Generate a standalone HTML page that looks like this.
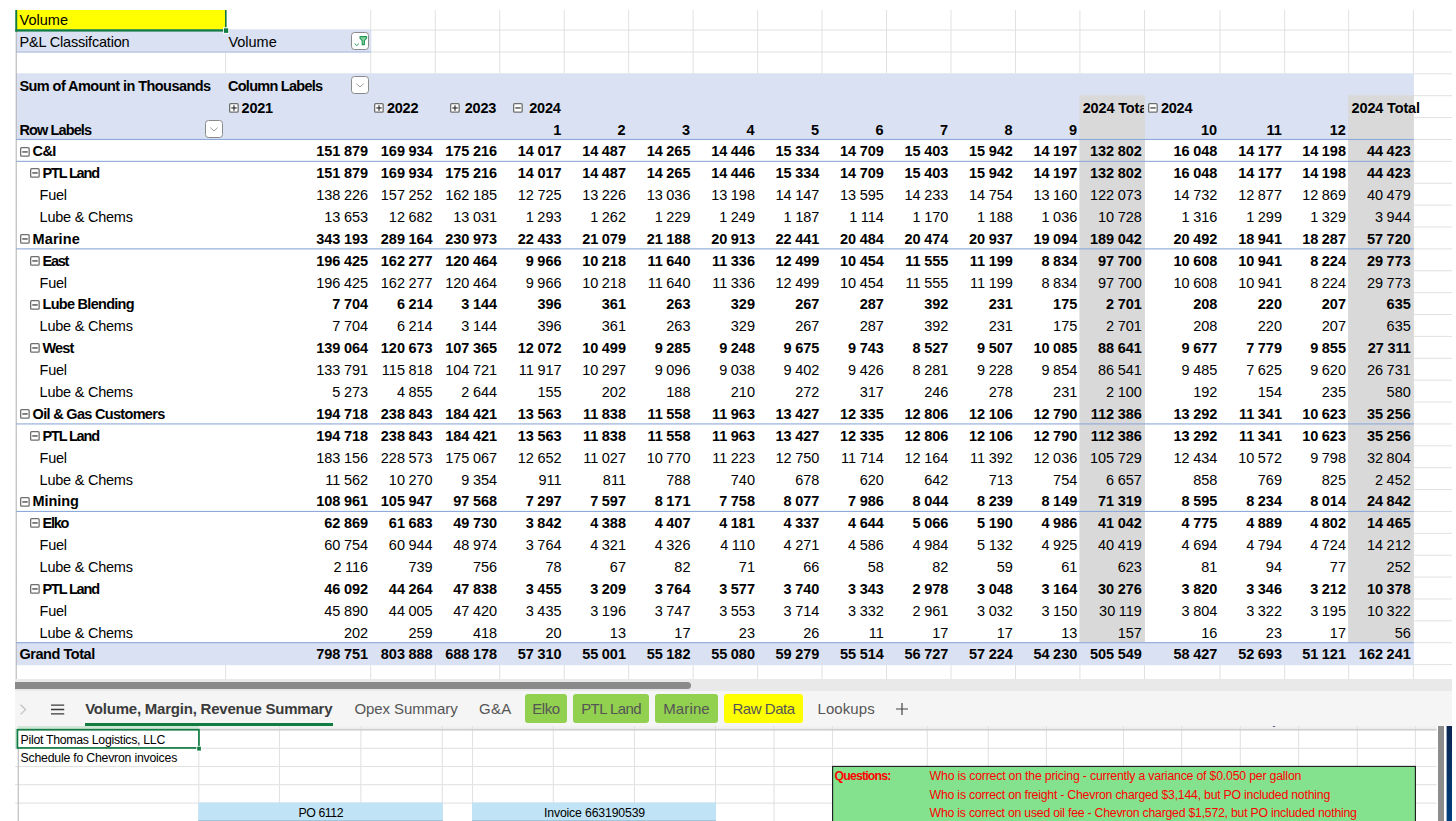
<!DOCTYPE html>
<html lang="en">
<head>
<meta charset="utf-8">
<title>Volume, Margin, Revenue Summary</title>
<style>
html,body{margin:0;padding:0;background:#fff;}
body{width:1456px;height:821px;position:relative;overflow:hidden;font-family:"Liberation Sans",sans-serif;}
.abs,.r,.c,.l,.hl,.vl,.box,.t{position:absolute;}
#top{position:absolute;left:0;top:10px;width:1456px;height:669px;overflow:hidden;font-size:14.5px;color:#000;}
#top .in{position:absolute;left:0;top:-10px;width:1456px;height:700px;}
.hl{height:1px;background:#e1e1e1;}
.vl{width:1px;background:#e1e1e1;}
.r{left:0;width:1456px;height:21.875px;line-height:21.875px;white-space:nowrap;}
.r.b{font-weight:bold;}
.r.b .c,.r.b .l{top:1.9px;}
.r.h5 .c,.r.h5 .l{top:2.5px;}
.r.h6 .c,.r.h6 .l{top:2.3px;}
.c{top:2.1px;text-align:right;word-spacing:-0.5px;height:21.875px;}
.l{top:2.1px;height:21.875px;}
.bx{position:absolute;top:6.25px;}
.dd{position:absolute;width:16px;height:16px;border:1px solid #8a8a8a;border-radius:3.5px;background:#fff;}
.dd svg{position:absolute;left:0;top:0;}
</style>
</head>
<body>
<div id="top"><div class="in">
<svg class="abs" style="left:0;top:0" width="1456" height="700" viewBox="0 0 1456 700"><rect x="16" y="29.58" width="1436" height="1.0" fill="#e1e1e1"/><rect x="16" y="51.46" width="1436" height="1.0" fill="#e1e1e1"/><rect x="16" y="73.34" width="1436" height="1.0" fill="#e1e1e1"/><rect x="16" y="95.22" width="1436" height="1.0" fill="#e1e1e1"/><rect x="16" y="117.1" width="1436" height="1.0" fill="#e1e1e1"/><rect x="16" y="138.98" width="1436" height="1.0" fill="#e1e1e1"/><rect x="16" y="160.86" width="1436" height="1.0" fill="#e1e1e1"/><rect x="16" y="182.74" width="1436" height="1.0" fill="#e1e1e1"/><rect x="16" y="204.62" width="1436" height="1.0" fill="#e1e1e1"/><rect x="16" y="226.5" width="1436" height="1.0" fill="#e1e1e1"/><rect x="16" y="248.38" width="1436" height="1.0" fill="#e1e1e1"/><rect x="16" y="270.26" width="1436" height="1.0" fill="#e1e1e1"/><rect x="16" y="292.14" width="1436" height="1.0" fill="#e1e1e1"/><rect x="16" y="314.02" width="1436" height="1.0" fill="#e1e1e1"/><rect x="16" y="335.9" width="1436" height="1.0" fill="#e1e1e1"/><rect x="16" y="357.78" width="1436" height="1.0" fill="#e1e1e1"/><rect x="16" y="379.66" width="1436" height="1.0" fill="#e1e1e1"/><rect x="16" y="401.54" width="1436" height="1.0" fill="#e1e1e1"/><rect x="16" y="423.42" width="1436" height="1.0" fill="#e1e1e1"/><rect x="16" y="445.3" width="1436" height="1.0" fill="#e1e1e1"/><rect x="16" y="467.18" width="1436" height="1.0" fill="#e1e1e1"/><rect x="16" y="489.06" width="1436" height="1.0" fill="#e1e1e1"/><rect x="16" y="510.94" width="1436" height="1.0" fill="#e1e1e1"/><rect x="16" y="532.82" width="1436" height="1.0" fill="#e1e1e1"/><rect x="16" y="554.7" width="1436" height="1.0" fill="#e1e1e1"/><rect x="16" y="576.58" width="1436" height="1.0" fill="#e1e1e1"/><rect x="16" y="598.46" width="1436" height="1.0" fill="#e1e1e1"/><rect x="16" y="620.34" width="1436" height="1.0" fill="#e1e1e1"/><rect x="16" y="642.22" width="1436" height="1.0" fill="#e1e1e1"/><rect x="16" y="664.1" width="1436" height="1.0" fill="#e1e1e1"/><rect x="16" y="685.98" width="1436" height="1.0" fill="#e1e1e1"/><rect x="225.1" y="0" width="1.0" height="679" fill="#e1e1e1"/><rect x="370.2" y="0" width="1.0" height="679" fill="#e1e1e1"/><rect x="434.8" y="0" width="1.0" height="679" fill="#e1e1e1"/><rect x="499.2" y="0" width="1.0" height="679" fill="#e1e1e1"/><rect x="563.7" y="0" width="1.0" height="679" fill="#e1e1e1"/><rect x="628.1" y="0" width="1.0" height="679" fill="#e1e1e1"/><rect x="692.6" y="0" width="1.0" height="679" fill="#e1e1e1"/><rect x="757.1" y="0" width="1.0" height="679" fill="#e1e1e1"/><rect x="821.5" y="0" width="1.0" height="679" fill="#e1e1e1"/><rect x="886.0" y="0" width="1.0" height="679" fill="#e1e1e1"/><rect x="950.5" y="0" width="1.0" height="679" fill="#e1e1e1"/><rect x="1015.0" y="0" width="1.0" height="679" fill="#e1e1e1"/><rect x="1079.4" y="0" width="1.0" height="679" fill="#e1e1e1"/><rect x="1144.0" y="0" width="1.0" height="679" fill="#e1e1e1"/><rect x="1219.5" y="0" width="1.0" height="679" fill="#e1e1e1"/><rect x="1284.1" y="0" width="1.0" height="679" fill="#e1e1e1"/><rect x="1348.1" y="0" width="1.0" height="679" fill="#e1e1e1"/><rect x="1412.9" y="0" width="1.0" height="679" fill="#e1e1e1"/><rect x="16.5" y="73.34" width="1397.4" height="591.76" fill="#fff"/><rect x="16" y="0" width="210.1" height="30.58" fill="#ffff00"/><rect x="16" y="29.58" width="355.2" height="22.88" fill="#d9e1f2"/><rect x="16" y="51.36" width="355.2" height="1.2" fill="#b4c6e7"/><rect x="16" y="73.34" width="1397.9" height="66.64" fill="#d9e1f2"/><rect x="1079.4" y="95.22" width="65.6" height="547.5" fill="#d9d9d9"/><rect x="1348.1" y="95.22" width="65.8" height="547.5" fill="#d9d9d9"/><rect x="16" y="642.22" width="1397.9" height="22.88" fill="#d9e1f2"/><rect x="16" y="138.93" width="1397.9" height="1.1" fill="#8ea9db"/><rect x="16" y="160.81" width="1397.9" height="1.1" fill="#8ea9db"/><rect x="16" y="248.33" width="1397.9" height="1.1" fill="#8ea9db"/><rect x="16" y="423.37" width="1397.9" height="1.1" fill="#8ea9db"/><rect x="16" y="510.89" width="1397.9" height="1.1" fill="#8ea9db"/><rect x="16" y="642.17" width="1397.9" height="1.1" fill="#8ea9db"/><rect x="15.7" y="0" width="1.0" height="679" fill="#b0b0b0"/><rect x="15.3" y="0" width="1.9" height="31.58" fill="#107c41"/><rect x="15.3" y="29.28" width="211.1" height="2.3" fill="#107c41"/><rect x="225.0" y="0" width="1.6" height="27.88" fill="#107c41"/><rect x="223.0" y="27.28" width="6.0" height="6.6" fill="#fff"/><rect x="223.9" y="28.28" width="4.3" height="4.6" fill="#107c41"/></svg>
<div class="r " style="top:8.1px"><span class="l" style="left:19.6px;">Volume</span></div>
<div class="r " style="top:29.98px"><span class="l" style="left:19.6px;letter-spacing:-0.188px;">P&amp;L Classifcation</span><span class="l" style="left:228.4px;">Volume</span></div>
<div class="r b" style="top:73.72px"><span class="l" style="left:19.4px;letter-spacing:-0.56px;">Sum of Amount in Thousands</span><span class="l" style="left:228px;letter-spacing:-0.734px;">Column Labels</span></div>
<div class="r b h5" style="top:95.6px"><svg class="bx" style="left:228.0px" width="12" height="12" viewBox="0 0 12 12"><rect x="1.65" y="1.65" width="8.5" height="8.5" rx="1" fill="#fff" stroke="#6e6e6e" stroke-width="1.3"/><g stroke="#303030" stroke-width="1.2" fill="none"><path d="M3.3 5.95H8.7"/><path d="M6 3.3V8.7"/></g></svg><span class="l" style="left:241.6px;letter-spacing:-0.267px;">2021</span><svg class="bx" style="left:373.4px" width="12" height="12" viewBox="0 0 12 12"><rect x="1.65" y="1.65" width="8.5" height="8.5" rx="1" fill="#fff" stroke="#6e6e6e" stroke-width="1.3"/><g stroke="#303030" stroke-width="1.2" fill="none"><path d="M3.3 5.95H8.7"/><path d="M6 3.3V8.7"/></g></svg><span class="l" style="left:387px;letter-spacing:-0.267px;">2022</span><svg class="bx" style="left:449.2px" width="12" height="12" viewBox="0 0 12 12"><rect x="1.65" y="1.65" width="8.5" height="8.5" rx="1" fill="#fff" stroke="#6e6e6e" stroke-width="1.3"/><g stroke="#303030" stroke-width="1.2" fill="none"><path d="M3.3 5.95H8.7"/><path d="M6 3.3V8.7"/></g></svg><span class="l" style="left:464.8px;letter-spacing:-0.267px;">2023</span><svg class="bx" style="left:512.3px" width="12" height="12" viewBox="0 0 12 12"><rect x="1.65" y="1.65" width="8.5" height="8.5" rx="1" fill="#fff" stroke="#6e6e6e" stroke-width="1.3"/><g stroke="#303030" stroke-width="1.2" fill="none"><path d="M3.3 5.95H8.7"/></g></svg><span class="l" style="left:529.3px;letter-spacing:-0.267px;">2024</span><span class="l" style="left:1082.7px;width:61.8px;overflow:hidden;letter-spacing:-0.156px;">2024 Total</span><svg class="bx" style="left:1147.4px" width="12" height="12" viewBox="0 0 12 12"><rect x="1.65" y="1.65" width="8.5" height="8.5" rx="1" fill="#fff" stroke="#6e6e6e" stroke-width="1.3"/><g stroke="#303030" stroke-width="1.2" fill="none"><path d="M3.3 5.95H8.7"/></g></svg><span class="l" style="left:1161px;letter-spacing:-0.267px;">2024</span><span class="l" style="left:1351.6px;letter-spacing:-0.156px;">2024 Total</span></div>
<div class="r b h6" style="top:117.47px"><span class="l" style="left:19.5px;letter-spacing:-0.889px;">Row Labels</span><span class="c" style="left:499.7px;width:61.6px">1</span><span class="c" style="left:564.2px;width:61.5px">2</span><span class="c" style="left:628.6px;width:61.6px">3</span><span class="c" style="left:693.1px;width:61.6px">4</span><span class="c" style="left:757.6px;width:61.5px">5</span><span class="c" style="left:822.0px;width:61.6px">6</span><span class="c" style="left:886.5px;width:61.6px">7</span><span class="c" style="left:951.0px;width:61.6px">8</span><span class="c" style="left:1015.5px;width:61.5px">9</span><span class="c" style="left:1144.5px;width:72.7px">10</span><span class="c" style="left:1220.0px;width:61.8px">11</span><span class="c" style="left:1284.6px;width:61.2px">12</span></div>
<div class="r b" style="top:139.35px"><svg class="bx" style="left:19.3px" width="12" height="12" viewBox="0 0 12 12"><rect x="1.65" y="1.65" width="8.5" height="8.5" rx="1" fill="#fff" stroke="#6e6e6e" stroke-width="1.3"/><g stroke="#303030" stroke-width="1.2" fill="none"><path d="M3.3 5.95H8.7"/></g></svg><span class="l" style="left:32.6px;letter-spacing:-0.65px;">C&amp;I</span><span class="c" style="left:225.6px;width:142.5px">151 879</span><span class="c" style="left:370.7px;width:62.0px">169 934</span><span class="c" style="left:435.3px;width:61.8px">175 216</span><span class="c" style="left:499.7px;width:61.9px">14 017</span><span class="c" style="left:564.2px;width:61.8px">14 487</span><span class="c" style="left:628.6px;width:61.9px">14 265</span><span class="c" style="left:693.1px;width:61.9px">14 446</span><span class="c" style="left:757.6px;width:61.8px">15 334</span><span class="c" style="left:822.0px;width:61.9px">14 709</span><span class="c" style="left:886.5px;width:61.9px">15 403</span><span class="c" style="left:951.0px;width:61.9px">15 942</span><span class="c" style="left:1015.5px;width:61.8px">14 197</span><span class="c" style="left:1079.9px;width:62.0px">132 802</span><span class="c" style="left:1144.5px;width:72.9px">16 048</span><span class="c" style="left:1220.0px;width:62.0px">14 177</span><span class="c" style="left:1284.6px;width:61.4px">14 198</span><span class="c" style="left:1348.6px;width:62.2px">44 423</span></div>
<div class="r b" style="top:161.22px"><svg class="bx" style="left:29.2px" width="12" height="12" viewBox="0 0 12 12"><rect x="1.65" y="1.65" width="8.5" height="8.5" rx="1" fill="#fff" stroke="#6e6e6e" stroke-width="1.3"/><g stroke="#303030" stroke-width="1.2" fill="none"><path d="M3.3 5.95H8.7"/></g></svg><span class="l" style="left:42.5px;letter-spacing:-1.185px;">PTL Land</span><span class="c" style="left:225.6px;width:142.5px">151 879</span><span class="c" style="left:370.7px;width:62.0px">169 934</span><span class="c" style="left:435.3px;width:61.8px">175 216</span><span class="c" style="left:499.7px;width:61.9px">14 017</span><span class="c" style="left:564.2px;width:61.8px">14 487</span><span class="c" style="left:628.6px;width:61.9px">14 265</span><span class="c" style="left:693.1px;width:61.9px">14 446</span><span class="c" style="left:757.6px;width:61.8px">15 334</span><span class="c" style="left:822.0px;width:61.9px">14 709</span><span class="c" style="left:886.5px;width:61.9px">15 403</span><span class="c" style="left:951.0px;width:61.9px">15 942</span><span class="c" style="left:1015.5px;width:61.8px">14 197</span><span class="c" style="left:1079.9px;width:62.0px">132 802</span><span class="c" style="left:1144.5px;width:72.9px">16 048</span><span class="c" style="left:1220.0px;width:62.0px">14 177</span><span class="c" style="left:1284.6px;width:61.4px">14 198</span><span class="c" style="left:1348.6px;width:62.2px">44 423</span></div>
<div class="r " style="top:183.1px"><span class="l" style="left:39.6px;letter-spacing:-0.267px;">Fuel</span><span class="c" style="left:225.6px;width:142.5px">138 226</span><span class="c" style="left:370.7px;width:62.0px">157 252</span><span class="c" style="left:435.3px;width:61.8px">162 185</span><span class="c" style="left:499.7px;width:61.9px">12 725</span><span class="c" style="left:564.2px;width:61.8px">13 226</span><span class="c" style="left:628.6px;width:61.9px">13 036</span><span class="c" style="left:693.1px;width:61.9px">13 198</span><span class="c" style="left:757.6px;width:61.8px">14 147</span><span class="c" style="left:822.0px;width:61.9px">13 595</span><span class="c" style="left:886.5px;width:61.9px">14 233</span><span class="c" style="left:951.0px;width:61.9px">14 754</span><span class="c" style="left:1015.5px;width:61.8px">13 160</span><span class="c" style="left:1079.9px;width:62.0px">122 073</span><span class="c" style="left:1144.5px;width:72.9px">14 732</span><span class="c" style="left:1220.0px;width:62.0px">12 877</span><span class="c" style="left:1284.6px;width:61.4px">12 869</span><span class="c" style="left:1348.6px;width:62.2px">40 479</span></div>
<div class="r " style="top:204.97px"><span class="l" style="left:39.6px;letter-spacing:-0.236px;">Lube &amp; Chems</span><span class="c" style="left:225.6px;width:142.5px">13 653</span><span class="c" style="left:370.7px;width:62.0px">12 682</span><span class="c" style="left:435.3px;width:61.8px">13 031</span><span class="c" style="left:499.7px;width:61.9px">1 293</span><span class="c" style="left:564.2px;width:61.8px">1 262</span><span class="c" style="left:628.6px;width:61.9px">1 229</span><span class="c" style="left:693.1px;width:61.9px">1 249</span><span class="c" style="left:757.6px;width:61.8px">1 187</span><span class="c" style="left:822.0px;width:61.9px">1 114</span><span class="c" style="left:886.5px;width:61.9px">1 170</span><span class="c" style="left:951.0px;width:61.9px">1 188</span><span class="c" style="left:1015.5px;width:61.8px">1 036</span><span class="c" style="left:1079.9px;width:62.0px">10 728</span><span class="c" style="left:1144.5px;width:72.9px">1 316</span><span class="c" style="left:1220.0px;width:62.0px">1 299</span><span class="c" style="left:1284.6px;width:61.4px">1 329</span><span class="c" style="left:1348.6px;width:62.2px">3 944</span></div>
<div class="r b" style="top:226.85px"><svg class="bx" style="left:19.3px" width="12" height="12" viewBox="0 0 12 12"><rect x="1.65" y="1.65" width="8.5" height="8.5" rx="1" fill="#fff" stroke="#6e6e6e" stroke-width="1.3"/><g stroke="#303030" stroke-width="1.2" fill="none"><path d="M3.3 5.95H8.7"/></g></svg><span class="l" style="left:32.6px;letter-spacing:0.08px;">Marine</span><span class="c" style="left:225.6px;width:142.5px">343 193</span><span class="c" style="left:370.7px;width:62.0px">289 164</span><span class="c" style="left:435.3px;width:61.8px">230 973</span><span class="c" style="left:499.7px;width:61.9px">22 433</span><span class="c" style="left:564.2px;width:61.8px">21 079</span><span class="c" style="left:628.6px;width:61.9px">21 188</span><span class="c" style="left:693.1px;width:61.9px">20 913</span><span class="c" style="left:757.6px;width:61.8px">22 441</span><span class="c" style="left:822.0px;width:61.9px">20 484</span><span class="c" style="left:886.5px;width:61.9px">20 474</span><span class="c" style="left:951.0px;width:61.9px">20 937</span><span class="c" style="left:1015.5px;width:61.8px">19 094</span><span class="c" style="left:1079.9px;width:62.0px">189 042</span><span class="c" style="left:1144.5px;width:72.9px">20 492</span><span class="c" style="left:1220.0px;width:62.0px">18 941</span><span class="c" style="left:1284.6px;width:61.4px">18 287</span><span class="c" style="left:1348.6px;width:62.2px">57 720</span></div>
<div class="r b" style="top:248.72px"><svg class="bx" style="left:29.2px" width="12" height="12" viewBox="0 0 12 12"><rect x="1.65" y="1.65" width="8.5" height="8.5" rx="1" fill="#fff" stroke="#6e6e6e" stroke-width="1.3"/><g stroke="#303030" stroke-width="1.2" fill="none"><path d="M3.3 5.95H8.7"/></g></svg><span class="l" style="left:42.5px;letter-spacing:-1.267px;">East</span><span class="c" style="left:225.6px;width:142.5px">196 425</span><span class="c" style="left:370.7px;width:62.0px">162 277</span><span class="c" style="left:435.3px;width:61.8px">120 464</span><span class="c" style="left:499.7px;width:61.9px">9 966</span><span class="c" style="left:564.2px;width:61.8px">10 218</span><span class="c" style="left:628.6px;width:61.9px">11 640</span><span class="c" style="left:693.1px;width:61.9px">11 336</span><span class="c" style="left:757.6px;width:61.8px">12 499</span><span class="c" style="left:822.0px;width:61.9px">10 454</span><span class="c" style="left:886.5px;width:61.9px">11 555</span><span class="c" style="left:951.0px;width:61.9px">11 199</span><span class="c" style="left:1015.5px;width:61.8px">8 834</span><span class="c" style="left:1079.9px;width:62.0px">97 700</span><span class="c" style="left:1144.5px;width:72.9px">10 608</span><span class="c" style="left:1220.0px;width:62.0px">10 941</span><span class="c" style="left:1284.6px;width:61.4px">8 224</span><span class="c" style="left:1348.6px;width:62.2px">29 773</span></div>
<div class="r " style="top:270.6px"><span class="l" style="left:39.6px;letter-spacing:-0.267px;">Fuel</span><span class="c" style="left:225.6px;width:142.5px">196 425</span><span class="c" style="left:370.7px;width:62.0px">162 277</span><span class="c" style="left:435.3px;width:61.8px">120 464</span><span class="c" style="left:499.7px;width:61.9px">9 966</span><span class="c" style="left:564.2px;width:61.8px">10 218</span><span class="c" style="left:628.6px;width:61.9px">11 640</span><span class="c" style="left:693.1px;width:61.9px">11 336</span><span class="c" style="left:757.6px;width:61.8px">12 499</span><span class="c" style="left:822.0px;width:61.9px">10 454</span><span class="c" style="left:886.5px;width:61.9px">11 555</span><span class="c" style="left:951.0px;width:61.9px">11 199</span><span class="c" style="left:1015.5px;width:61.8px">8 834</span><span class="c" style="left:1079.9px;width:62.0px">97 700</span><span class="c" style="left:1144.5px;width:72.9px">10 608</span><span class="c" style="left:1220.0px;width:62.0px">10 941</span><span class="c" style="left:1284.6px;width:61.4px">8 224</span><span class="c" style="left:1348.6px;width:62.2px">29 773</span></div>
<div class="r b" style="top:292.48px"><svg class="bx" style="left:29.2px" width="12" height="12" viewBox="0 0 12 12"><rect x="1.65" y="1.65" width="8.5" height="8.5" rx="1" fill="#fff" stroke="#6e6e6e" stroke-width="1.3"/><g stroke="#303030" stroke-width="1.2" fill="none"><path d="M3.3 5.95H8.7"/></g></svg><span class="l" style="left:42.5px;letter-spacing:-0.717px;">Lube Blending</span><span class="c" style="left:225.6px;width:142.5px">7 704</span><span class="c" style="left:370.7px;width:62.0px">6 214</span><span class="c" style="left:435.3px;width:61.8px">3 144</span><span class="c" style="left:499.7px;width:61.9px">396</span><span class="c" style="left:564.2px;width:61.8px">361</span><span class="c" style="left:628.6px;width:61.9px">263</span><span class="c" style="left:693.1px;width:61.9px">329</span><span class="c" style="left:757.6px;width:61.8px">267</span><span class="c" style="left:822.0px;width:61.9px">287</span><span class="c" style="left:886.5px;width:61.9px">392</span><span class="c" style="left:951.0px;width:61.9px">231</span><span class="c" style="left:1015.5px;width:61.8px">175</span><span class="c" style="left:1079.9px;width:62.0px">2 701</span><span class="c" style="left:1144.5px;width:72.9px">208</span><span class="c" style="left:1220.0px;width:62.0px">220</span><span class="c" style="left:1284.6px;width:61.4px">207</span><span class="c" style="left:1348.6px;width:62.2px">635</span></div>
<div class="r " style="top:314.35px"><span class="l" style="left:39.6px;letter-spacing:-0.236px;">Lube &amp; Chems</span><span class="c" style="left:225.6px;width:142.5px">7 704</span><span class="c" style="left:370.7px;width:62.0px">6 214</span><span class="c" style="left:435.3px;width:61.8px">3 144</span><span class="c" style="left:499.7px;width:61.9px">396</span><span class="c" style="left:564.2px;width:61.8px">361</span><span class="c" style="left:628.6px;width:61.9px">263</span><span class="c" style="left:693.1px;width:61.9px">329</span><span class="c" style="left:757.6px;width:61.8px">267</span><span class="c" style="left:822.0px;width:61.9px">287</span><span class="c" style="left:886.5px;width:61.9px">392</span><span class="c" style="left:951.0px;width:61.9px">231</span><span class="c" style="left:1015.5px;width:61.8px">175</span><span class="c" style="left:1079.9px;width:62.0px">2 701</span><span class="c" style="left:1144.5px;width:72.9px">208</span><span class="c" style="left:1220.0px;width:62.0px">220</span><span class="c" style="left:1284.6px;width:61.4px">207</span><span class="c" style="left:1348.6px;width:62.2px">635</span></div>
<div class="r b" style="top:336.23px"><svg class="bx" style="left:29.2px" width="12" height="12" viewBox="0 0 12 12"><rect x="1.65" y="1.65" width="8.5" height="8.5" rx="1" fill="#fff" stroke="#6e6e6e" stroke-width="1.3"/><g stroke="#303030" stroke-width="1.2" fill="none"><path d="M3.3 5.95H8.7"/></g></svg><span class="l" style="left:42.5px;letter-spacing:-0.867px;">West</span><span class="c" style="left:225.6px;width:142.5px">139 064</span><span class="c" style="left:370.7px;width:62.0px">120 673</span><span class="c" style="left:435.3px;width:61.8px">107 365</span><span class="c" style="left:499.7px;width:61.9px">12 072</span><span class="c" style="left:564.2px;width:61.8px">10 499</span><span class="c" style="left:628.6px;width:61.9px">9 285</span><span class="c" style="left:693.1px;width:61.9px">9 248</span><span class="c" style="left:757.6px;width:61.8px">9 675</span><span class="c" style="left:822.0px;width:61.9px">9 743</span><span class="c" style="left:886.5px;width:61.9px">8 527</span><span class="c" style="left:951.0px;width:61.9px">9 507</span><span class="c" style="left:1015.5px;width:61.8px">10 085</span><span class="c" style="left:1079.9px;width:62.0px">88 641</span><span class="c" style="left:1144.5px;width:72.9px">9 677</span><span class="c" style="left:1220.0px;width:62.0px">7 779</span><span class="c" style="left:1284.6px;width:61.4px">9 855</span><span class="c" style="left:1348.6px;width:62.2px">27 311</span></div>
<div class="r " style="top:358.1px"><span class="l" style="left:39.6px;letter-spacing:-0.267px;">Fuel</span><span class="c" style="left:225.6px;width:142.5px">133 791</span><span class="c" style="left:370.7px;width:62.0px">115 818</span><span class="c" style="left:435.3px;width:61.8px">104 721</span><span class="c" style="left:499.7px;width:61.9px">11 917</span><span class="c" style="left:564.2px;width:61.8px">10 297</span><span class="c" style="left:628.6px;width:61.9px">9 096</span><span class="c" style="left:693.1px;width:61.9px">9 038</span><span class="c" style="left:757.6px;width:61.8px">9 402</span><span class="c" style="left:822.0px;width:61.9px">9 426</span><span class="c" style="left:886.5px;width:61.9px">8 281</span><span class="c" style="left:951.0px;width:61.9px">9 228</span><span class="c" style="left:1015.5px;width:61.8px">9 854</span><span class="c" style="left:1079.9px;width:62.0px">86 541</span><span class="c" style="left:1144.5px;width:72.9px">9 485</span><span class="c" style="left:1220.0px;width:62.0px">7 625</span><span class="c" style="left:1284.6px;width:61.4px">9 620</span><span class="c" style="left:1348.6px;width:62.2px">26 731</span></div>
<div class="r " style="top:379.98px"><span class="l" style="left:39.6px;letter-spacing:-0.236px;">Lube &amp; Chems</span><span class="c" style="left:225.6px;width:142.5px">5 273</span><span class="c" style="left:370.7px;width:62.0px">4 855</span><span class="c" style="left:435.3px;width:61.8px">2 644</span><span class="c" style="left:499.7px;width:61.9px">155</span><span class="c" style="left:564.2px;width:61.8px">202</span><span class="c" style="left:628.6px;width:61.9px">188</span><span class="c" style="left:693.1px;width:61.9px">210</span><span class="c" style="left:757.6px;width:61.8px">272</span><span class="c" style="left:822.0px;width:61.9px">317</span><span class="c" style="left:886.5px;width:61.9px">246</span><span class="c" style="left:951.0px;width:61.9px">278</span><span class="c" style="left:1015.5px;width:61.8px">231</span><span class="c" style="left:1079.9px;width:62.0px">2 100</span><span class="c" style="left:1144.5px;width:72.9px">192</span><span class="c" style="left:1220.0px;width:62.0px">154</span><span class="c" style="left:1284.6px;width:61.4px">235</span><span class="c" style="left:1348.6px;width:62.2px">580</span></div>
<div class="r b" style="top:401.85px"><svg class="bx" style="left:19.3px" width="12" height="12" viewBox="0 0 12 12"><rect x="1.65" y="1.65" width="8.5" height="8.5" rx="1" fill="#fff" stroke="#6e6e6e" stroke-width="1.3"/><g stroke="#303030" stroke-width="1.2" fill="none"><path d="M3.3 5.95H8.7"/></g></svg><span class="l" style="left:32.6px;letter-spacing:-0.689px;">Oil &amp; Gas Customers</span><span class="c" style="left:225.6px;width:142.5px">194 718</span><span class="c" style="left:370.7px;width:62.0px">238 843</span><span class="c" style="left:435.3px;width:61.8px">184 421</span><span class="c" style="left:499.7px;width:61.9px">13 563</span><span class="c" style="left:564.2px;width:61.8px">11 838</span><span class="c" style="left:628.6px;width:61.9px">11 558</span><span class="c" style="left:693.1px;width:61.9px">11 963</span><span class="c" style="left:757.6px;width:61.8px">13 427</span><span class="c" style="left:822.0px;width:61.9px">12 335</span><span class="c" style="left:886.5px;width:61.9px">12 806</span><span class="c" style="left:951.0px;width:61.9px">12 106</span><span class="c" style="left:1015.5px;width:61.8px">12 790</span><span class="c" style="left:1079.9px;width:62.0px">112 386</span><span class="c" style="left:1144.5px;width:72.9px">13 292</span><span class="c" style="left:1220.0px;width:62.0px">11 341</span><span class="c" style="left:1284.6px;width:61.4px">10 623</span><span class="c" style="left:1348.6px;width:62.2px">35 256</span></div>
<div class="r b" style="top:423.73px"><svg class="bx" style="left:29.2px" width="12" height="12" viewBox="0 0 12 12"><rect x="1.65" y="1.65" width="8.5" height="8.5" rx="1" fill="#fff" stroke="#6e6e6e" stroke-width="1.3"/><g stroke="#303030" stroke-width="1.2" fill="none"><path d="M3.3 5.95H8.7"/></g></svg><span class="l" style="left:42.5px;letter-spacing:-1.185px;">PTL Land</span><span class="c" style="left:225.6px;width:142.5px">194 718</span><span class="c" style="left:370.7px;width:62.0px">238 843</span><span class="c" style="left:435.3px;width:61.8px">184 421</span><span class="c" style="left:499.7px;width:61.9px">13 563</span><span class="c" style="left:564.2px;width:61.8px">11 838</span><span class="c" style="left:628.6px;width:61.9px">11 558</span><span class="c" style="left:693.1px;width:61.9px">11 963</span><span class="c" style="left:757.6px;width:61.8px">13 427</span><span class="c" style="left:822.0px;width:61.9px">12 335</span><span class="c" style="left:886.5px;width:61.9px">12 806</span><span class="c" style="left:951.0px;width:61.9px">12 106</span><span class="c" style="left:1015.5px;width:61.8px">12 790</span><span class="c" style="left:1079.9px;width:62.0px">112 386</span><span class="c" style="left:1144.5px;width:72.9px">13 292</span><span class="c" style="left:1220.0px;width:62.0px">11 341</span><span class="c" style="left:1284.6px;width:61.4px">10 623</span><span class="c" style="left:1348.6px;width:62.2px">35 256</span></div>
<div class="r " style="top:445.6px"><span class="l" style="left:39.6px;letter-spacing:-0.267px;">Fuel</span><span class="c" style="left:225.6px;width:142.5px">183 156</span><span class="c" style="left:370.7px;width:62.0px">228 573</span><span class="c" style="left:435.3px;width:61.8px">175 067</span><span class="c" style="left:499.7px;width:61.9px">12 652</span><span class="c" style="left:564.2px;width:61.8px">11 027</span><span class="c" style="left:628.6px;width:61.9px">10 770</span><span class="c" style="left:693.1px;width:61.9px">11 223</span><span class="c" style="left:757.6px;width:61.8px">12 750</span><span class="c" style="left:822.0px;width:61.9px">11 714</span><span class="c" style="left:886.5px;width:61.9px">12 164</span><span class="c" style="left:951.0px;width:61.9px">11 392</span><span class="c" style="left:1015.5px;width:61.8px">12 036</span><span class="c" style="left:1079.9px;width:62.0px">105 729</span><span class="c" style="left:1144.5px;width:72.9px">12 434</span><span class="c" style="left:1220.0px;width:62.0px">10 572</span><span class="c" style="left:1284.6px;width:61.4px">9 798</span><span class="c" style="left:1348.6px;width:62.2px">32 804</span></div>
<div class="r " style="top:467.48px"><span class="l" style="left:39.6px;letter-spacing:-0.236px;">Lube &amp; Chems</span><span class="c" style="left:225.6px;width:142.5px">11 562</span><span class="c" style="left:370.7px;width:62.0px">10 270</span><span class="c" style="left:435.3px;width:61.8px">9 354</span><span class="c" style="left:499.7px;width:61.9px">911</span><span class="c" style="left:564.2px;width:61.8px">811</span><span class="c" style="left:628.6px;width:61.9px">788</span><span class="c" style="left:693.1px;width:61.9px">740</span><span class="c" style="left:757.6px;width:61.8px">678</span><span class="c" style="left:822.0px;width:61.9px">620</span><span class="c" style="left:886.5px;width:61.9px">642</span><span class="c" style="left:951.0px;width:61.9px">713</span><span class="c" style="left:1015.5px;width:61.8px">754</span><span class="c" style="left:1079.9px;width:62.0px">6 657</span><span class="c" style="left:1144.5px;width:72.9px">858</span><span class="c" style="left:1220.0px;width:62.0px">769</span><span class="c" style="left:1284.6px;width:61.4px">825</span><span class="c" style="left:1348.6px;width:62.2px">2 452</span></div>
<div class="r b" style="top:489.35px"><svg class="bx" style="left:19.3px" width="12" height="12" viewBox="0 0 12 12"><rect x="1.65" y="1.65" width="8.5" height="8.5" rx="1" fill="#fff" stroke="#6e6e6e" stroke-width="1.3"/><g stroke="#303030" stroke-width="1.2" fill="none"><path d="M3.3 5.95H8.7"/></g></svg><span class="l" style="left:32.6px;letter-spacing:-0.08px;">Mining</span><span class="c" style="left:225.6px;width:142.5px">108 961</span><span class="c" style="left:370.7px;width:62.0px">105 947</span><span class="c" style="left:435.3px;width:61.8px">97 568</span><span class="c" style="left:499.7px;width:61.9px">7 297</span><span class="c" style="left:564.2px;width:61.8px">7 597</span><span class="c" style="left:628.6px;width:61.9px">8 171</span><span class="c" style="left:693.1px;width:61.9px">7 758</span><span class="c" style="left:757.6px;width:61.8px">8 077</span><span class="c" style="left:822.0px;width:61.9px">7 986</span><span class="c" style="left:886.5px;width:61.9px">8 044</span><span class="c" style="left:951.0px;width:61.9px">8 239</span><span class="c" style="left:1015.5px;width:61.8px">8 149</span><span class="c" style="left:1079.9px;width:62.0px">71 319</span><span class="c" style="left:1144.5px;width:72.9px">8 595</span><span class="c" style="left:1220.0px;width:62.0px">8 234</span><span class="c" style="left:1284.6px;width:61.4px">8 014</span><span class="c" style="left:1348.6px;width:62.2px">24 842</span></div>
<div class="r b" style="top:511.23px"><svg class="bx" style="left:29.2px" width="12" height="12" viewBox="0 0 12 12"><rect x="1.65" y="1.65" width="8.5" height="8.5" rx="1" fill="#fff" stroke="#6e6e6e" stroke-width="1.3"/><g stroke="#303030" stroke-width="1.2" fill="none"><path d="M3.3 5.95H8.7"/></g></svg><span class="l" style="left:42.5px;letter-spacing:-1.267px;">Elko</span><span class="c" style="left:225.6px;width:142.5px">62 869</span><span class="c" style="left:370.7px;width:62.0px">61 683</span><span class="c" style="left:435.3px;width:61.8px">49 730</span><span class="c" style="left:499.7px;width:61.9px">3 842</span><span class="c" style="left:564.2px;width:61.8px">4 388</span><span class="c" style="left:628.6px;width:61.9px">4 407</span><span class="c" style="left:693.1px;width:61.9px">4 181</span><span class="c" style="left:757.6px;width:61.8px">4 337</span><span class="c" style="left:822.0px;width:61.9px">4 644</span><span class="c" style="left:886.5px;width:61.9px">5 066</span><span class="c" style="left:951.0px;width:61.9px">5 190</span><span class="c" style="left:1015.5px;width:61.8px">4 986</span><span class="c" style="left:1079.9px;width:62.0px">41 042</span><span class="c" style="left:1144.5px;width:72.9px">4 775</span><span class="c" style="left:1220.0px;width:62.0px">4 889</span><span class="c" style="left:1284.6px;width:61.4px">4 802</span><span class="c" style="left:1348.6px;width:62.2px">14 465</span></div>
<div class="r " style="top:533.1px"><span class="l" style="left:39.6px;letter-spacing:-0.267px;">Fuel</span><span class="c" style="left:225.6px;width:142.5px">60 754</span><span class="c" style="left:370.7px;width:62.0px">60 944</span><span class="c" style="left:435.3px;width:61.8px">48 974</span><span class="c" style="left:499.7px;width:61.9px">3 764</span><span class="c" style="left:564.2px;width:61.8px">4 321</span><span class="c" style="left:628.6px;width:61.9px">4 326</span><span class="c" style="left:693.1px;width:61.9px">4 110</span><span class="c" style="left:757.6px;width:61.8px">4 271</span><span class="c" style="left:822.0px;width:61.9px">4 586</span><span class="c" style="left:886.5px;width:61.9px">4 984</span><span class="c" style="left:951.0px;width:61.9px">5 132</span><span class="c" style="left:1015.5px;width:61.8px">4 925</span><span class="c" style="left:1079.9px;width:62.0px">40 419</span><span class="c" style="left:1144.5px;width:72.9px">4 694</span><span class="c" style="left:1220.0px;width:62.0px">4 794</span><span class="c" style="left:1284.6px;width:61.4px">4 724</span><span class="c" style="left:1348.6px;width:62.2px">14 212</span></div>
<div class="r " style="top:554.98px"><span class="l" style="left:39.6px;letter-spacing:-0.236px;">Lube &amp; Chems</span><span class="c" style="left:225.6px;width:142.5px">2 116</span><span class="c" style="left:370.7px;width:62.0px">739</span><span class="c" style="left:435.3px;width:61.8px">756</span><span class="c" style="left:499.7px;width:61.9px">78</span><span class="c" style="left:564.2px;width:61.8px">67</span><span class="c" style="left:628.6px;width:61.9px">82</span><span class="c" style="left:693.1px;width:61.9px">71</span><span class="c" style="left:757.6px;width:61.8px">66</span><span class="c" style="left:822.0px;width:61.9px">58</span><span class="c" style="left:886.5px;width:61.9px">82</span><span class="c" style="left:951.0px;width:61.9px">59</span><span class="c" style="left:1015.5px;width:61.8px">61</span><span class="c" style="left:1079.9px;width:62.0px">623</span><span class="c" style="left:1144.5px;width:72.9px">81</span><span class="c" style="left:1220.0px;width:62.0px">94</span><span class="c" style="left:1284.6px;width:61.4px">77</span><span class="c" style="left:1348.6px;width:62.2px">252</span></div>
<div class="r b" style="top:576.85px"><svg class="bx" style="left:29.2px" width="12" height="12" viewBox="0 0 12 12"><rect x="1.65" y="1.65" width="8.5" height="8.5" rx="1" fill="#fff" stroke="#6e6e6e" stroke-width="1.3"/><g stroke="#303030" stroke-width="1.2" fill="none"><path d="M3.3 5.95H8.7"/></g></svg><span class="l" style="left:42.5px;letter-spacing:-1.185px;">PTL Land</span><span class="c" style="left:225.6px;width:142.5px">46 092</span><span class="c" style="left:370.7px;width:62.0px">44 264</span><span class="c" style="left:435.3px;width:61.8px">47 838</span><span class="c" style="left:499.7px;width:61.9px">3 455</span><span class="c" style="left:564.2px;width:61.8px">3 209</span><span class="c" style="left:628.6px;width:61.9px">3 764</span><span class="c" style="left:693.1px;width:61.9px">3 577</span><span class="c" style="left:757.6px;width:61.8px">3 740</span><span class="c" style="left:822.0px;width:61.9px">3 343</span><span class="c" style="left:886.5px;width:61.9px">2 978</span><span class="c" style="left:951.0px;width:61.9px">3 048</span><span class="c" style="left:1015.5px;width:61.8px">3 164</span><span class="c" style="left:1079.9px;width:62.0px">30 276</span><span class="c" style="left:1144.5px;width:72.9px">3 820</span><span class="c" style="left:1220.0px;width:62.0px">3 346</span><span class="c" style="left:1284.6px;width:61.4px">3 212</span><span class="c" style="left:1348.6px;width:62.2px">10 378</span></div>
<div class="r " style="top:598.73px"><span class="l" style="left:39.6px;letter-spacing:-0.267px;">Fuel</span><span class="c" style="left:225.6px;width:142.5px">45 890</span><span class="c" style="left:370.7px;width:62.0px">44 005</span><span class="c" style="left:435.3px;width:61.8px">47 420</span><span class="c" style="left:499.7px;width:61.9px">3 435</span><span class="c" style="left:564.2px;width:61.8px">3 196</span><span class="c" style="left:628.6px;width:61.9px">3 747</span><span class="c" style="left:693.1px;width:61.9px">3 553</span><span class="c" style="left:757.6px;width:61.8px">3 714</span><span class="c" style="left:822.0px;width:61.9px">3 332</span><span class="c" style="left:886.5px;width:61.9px">2 961</span><span class="c" style="left:951.0px;width:61.9px">3 032</span><span class="c" style="left:1015.5px;width:61.8px">3 150</span><span class="c" style="left:1079.9px;width:62.0px">30 119</span><span class="c" style="left:1144.5px;width:72.9px">3 804</span><span class="c" style="left:1220.0px;width:62.0px">3 322</span><span class="c" style="left:1284.6px;width:61.4px">3 195</span><span class="c" style="left:1348.6px;width:62.2px">10 322</span></div>
<div class="r " style="top:620.6px"><span class="l" style="left:39.6px;letter-spacing:-0.236px;">Lube &amp; Chems</span><span class="c" style="left:225.6px;width:142.5px">202</span><span class="c" style="left:370.7px;width:62.0px">259</span><span class="c" style="left:435.3px;width:61.8px">418</span><span class="c" style="left:499.7px;width:61.9px">20</span><span class="c" style="left:564.2px;width:61.8px">13</span><span class="c" style="left:628.6px;width:61.9px">17</span><span class="c" style="left:693.1px;width:61.9px">23</span><span class="c" style="left:757.6px;width:61.8px">26</span><span class="c" style="left:822.0px;width:61.9px">11</span><span class="c" style="left:886.5px;width:61.9px">17</span><span class="c" style="left:951.0px;width:61.9px">17</span><span class="c" style="left:1015.5px;width:61.8px">13</span><span class="c" style="left:1079.9px;width:62.0px">157</span><span class="c" style="left:1144.5px;width:72.9px">16</span><span class="c" style="left:1220.0px;width:62.0px">23</span><span class="c" style="left:1284.6px;width:61.4px">17</span><span class="c" style="left:1348.6px;width:62.2px">56</span></div>
<div class="r b" style="top:642.48px"><span class="l" style="left:19.4px;letter-spacing:-0.45px;">Grand Total</span><span class="c" style="left:225.6px;width:142.5px">798 751</span><span class="c" style="left:370.7px;width:62.0px">803 888</span><span class="c" style="left:435.3px;width:61.8px">688 178</span><span class="c" style="left:499.7px;width:61.9px">57 310</span><span class="c" style="left:564.2px;width:61.8px">55 001</span><span class="c" style="left:628.6px;width:61.9px">55 182</span><span class="c" style="left:693.1px;width:61.9px">55 080</span><span class="c" style="left:757.6px;width:61.8px">59 279</span><span class="c" style="left:822.0px;width:61.9px">55 514</span><span class="c" style="left:886.5px;width:61.9px">56 727</span><span class="c" style="left:951.0px;width:61.9px">57 224</span><span class="c" style="left:1015.5px;width:61.8px">54 230</span><span class="c" style="left:1079.9px;width:62.0px">505 549</span><span class="c" style="left:1144.5px;width:72.9px">58 427</span><span class="c" style="left:1220.0px;width:62.0px">52 693</span><span class="c" style="left:1284.6px;width:61.4px">51 121</span><span class="c" style="left:1348.6px;width:62.2px">162 241</span></div>
<div class="dd" style="left:350.6px;top:32.4px"><svg width="16" height="16" viewBox="0 0 16 16"><path d="M2.6 10.6 L4.8 12.6 L7 10.6" fill="none" stroke="#2f9e5b" stroke-width="1"/><path d="M8 3.6 H14.6 V5.2 L12.4 7.6 V11.6 H10.2 V7.6 L8 5.2 Z" fill="#8fd0a5" stroke="#1f9a55" stroke-width="1.1" stroke-linejoin="round"/></svg></div>
<div class="dd" style="left:350.6px;top:76.2px"><svg width="16" height="16" viewBox="0 0 16 16"><path d="M4.3 6.6 L8 10 L11.7 6.6" fill="none" stroke="#9a9a9a" stroke-width="1"/></svg></div>
<div class="dd" style="left:204.8px;top:120.0px"><svg width="16" height="16" viewBox="0 0 16 16"><path d="M4.3 6.6 L8 10 L11.7 6.6" fill="none" stroke="#9a9a9a" stroke-width="1"/></svg></div>
</div></div>
<div class="abs" style="left:15px;top:679px;width:1437px;height:11.5px;background:#e9e9e9"></div>
<div class="abs" style="left:15px;top:682.3px;width:676px;height:6.5px;background:#8a8a8a;border-radius:0 3.5px 3.5px 0"></div>
<div id="tabs" class="abs" style="left:15px;top:690.5px;width:1437px;height:38px;background:#f5f5f5;font-size:15px;color:#555;white-space:nowrap">
<svg class="abs" style="left:4px;top:12px" width="10" height="14" viewBox="0 0 10 14"><path d="M1.5 1.8 L6.6 6.6 L1.5 11.4" fill="none" stroke="#c2c2c2" stroke-width="1.3"/></svg>
<svg class="abs" style="left:35px;top:12px" width="16" height="14" viewBox="0 0 16 14"><path d="M1 2.1 H14.2 M1 6.5 H14.2 M1 10.8 H14.2" fill="none" stroke="#3a3a3a" stroke-width="1.3"/></svg>
<div class="abs" style="left:70px;top:3.8px;width:247.5px;height:28.4px;line-height:30.4px;text-align:center;border-radius:3px;font-weight:bold;color:#3b3b3b;letter-spacing:-0.217px;">Volume, Margin, Revenue Summary</div>
<div class="abs" style="left:69.8px;top:32.8px;width:248px;height:2.3px;background:#107c41"></div>
<div class="abs" style="left:339px;top:3.8px;width:104px;height:28.4px;line-height:30.4px;text-align:center;border-radius:3px;letter-spacing:-0.091px;">Opex Summary</div>
<div class="abs" style="left:463px;top:3.8px;width:34.5px;height:28.4px;line-height:30.4px;text-align:center;border-radius:3px;letter-spacing:0.25px;">G&amp;A</div>
<div class="abs" style="left:510.2px;top:3.8px;width:41.6px;height:28.4px;line-height:30.4px;text-align:center;border-radius:3px;background:#92d050;letter-spacing:-0.367px;">Elko</div>
<div class="abs" style="left:558.2px;top:3.8px;width:75.8px;height:28.4px;line-height:30.4px;text-align:center;border-radius:3px;background:#92d050;letter-spacing:-0.571px;">PTL Land</div>
<div class="abs" style="left:640.4px;top:3.8px;width:62.3px;height:28.4px;line-height:30.4px;text-align:center;border-radius:3px;background:#92d050;letter-spacing:0.12px;">Marine</div>
<div class="abs" style="left:709.2px;top:3.8px;width:78.8px;height:28.4px;line-height:30.4px;text-align:center;border-radius:3px;background:#ffff00;letter-spacing:-0.443px;">Raw Data</div>
<div class="abs" style="left:802.5px;top:3.8px;width:56.7px;height:28.4px;line-height:30.4px;text-align:center;border-radius:3px;letter-spacing:0.083px;">Lookups</div>
<svg class="abs" style="left:880px;top:11px" width="14" height="14" viewBox="0 0 14 14"><path d="M7 1 V13 M1 7 H13" fill="none" stroke="#444" stroke-width="1.2"/></svg>
</div>
<div id="low" class="abs" style="left:15px;top:726px;width:1437px;height:95px;overflow:hidden;background:#fff;font-size:12.3px;color:#000;white-space:nowrap">
<div class="abs" style="left:-15px;top:-726px;width:1456px;height:821px">
<svg class="abs" style="left:0;top:0" width="1456" height="821" viewBox="0 0 1456 821"><rect x="15" y="726" width="1421.8" height="3" fill="#f1f1f1"/><rect x="18" y="726" width="180.8" height="3" fill="#cde6d5"/><rect x="15" y="729" width="3" height="19.6" fill="#d3e9da"/><rect x="15" y="747.75" width="1421.8" height="1.1" fill="#e2e2e2"/><rect x="15" y="765.95" width="1421.8" height="1.1" fill="#e2e2e2"/><rect x="15" y="784.15" width="1421.8" height="1.1" fill="#e2e2e2"/><rect x="15" y="802.55" width="1421.8" height="1.1" fill="#e2e2e2"/><rect x="198.25" y="726" width="1.1" height="95" fill="#e2e2e2"/><rect x="278.95" y="726" width="1.1" height="95" fill="#e2e2e2"/><rect x="360.35" y="726" width="1.1" height="95" fill="#e2e2e2"/><rect x="441.75" y="726" width="1.1" height="95" fill="#e2e2e2"/><rect x="471.95" y="726" width="1.1" height="95" fill="#e2e2e2"/><rect x="552.75" y="726" width="1.1" height="95" fill="#e2e2e2"/><rect x="633.95" y="726" width="1.1" height="95" fill="#e2e2e2"/><rect x="714.95" y="726" width="1.1" height="95" fill="#e2e2e2"/><rect x="773.45" y="726" width="1.1" height="95" fill="#e2e2e2"/><rect x="831.95" y="726" width="1.1" height="95" fill="#e2e2e2"/><rect x="926.75" y="726" width="1.1" height="95" fill="#e2e2e2"/><rect x="987.75" y="726" width="1.1" height="95" fill="#e2e2e2"/><rect x="1045.85" y="726" width="1.1" height="95" fill="#e2e2e2"/><rect x="1122.95" y="726" width="1.1" height="95" fill="#e2e2e2"/><rect x="1181.05" y="726" width="1.1" height="95" fill="#e2e2e2"/><rect x="1239.75" y="726" width="1.1" height="95" fill="#e2e2e2"/><rect x="1298.05" y="726" width="1.1" height="95" fill="#e2e2e2"/><rect x="1356.75" y="726" width="1.1" height="95" fill="#e2e2e2"/><rect x="1414.85" y="726" width="1.1" height="95" fill="#e2e2e2"/><rect x="18" y="728.9" width="1418.8" height="1.7" fill="#cfcfcf"/><rect x="17.7" y="748" width="1.1" height="73" fill="#b9b9b9"/><rect x="198.2" y="802.5" width="244.7" height="18.5" fill="#c0e4f5"/><rect x="472.0" y="802.5" width="244.0" height="18.5" fill="#c0e4f5"/><rect x="198.2" y="820.1" width="244.7" height="0.9" fill="#9fc2d6"/><rect x="472.0" y="820.1" width="244.0" height="0.9" fill="#9fc2d6"/><rect x="832.6" y="766.4" width="582.8" height="60" fill="#84e28f" stroke="#1a1a1a" stroke-width="1.1"/><rect x="1436.8" y="726" width="15.2" height="95" fill="#fff"/><rect x="1438" y="726" width="6" height="95" fill="#8c8c8c"/><defs><linearGradient id="nv" x1="0" y1="0" x2="0" y2="1"><stop offset="0" stop-color="#0a2550"/><stop offset="1" stop-color="#003f7d"/></linearGradient></defs><rect x="1446.6" y="726" width="5.4" height="95" fill="url(#nv)"/><rect x="17.45" y="729.7" width="181.5" height="18.25" fill="none" stroke="#107c41" stroke-width="1.7"/><rect x="196.4" y="745.9" width="5.3" height="5.5" fill="#fff"/><rect x="197.2" y="746.7" width="3.7" height="3.9" fill="#107c41"/><rect x="1272.8" y="726.0" width="2.4" height="1.0" fill="#5a6580"/></svg>
<span class="abs" style="left:20.6px;top:729.9px;height:18.3px;line-height:21.7px;letter-spacing:-0.288px;">Pilot Thomas Logistics, LLC</span>
<span class="abs" style="left:20.6px;top:748.2px;height:18.3px;line-height:21.7px;letter-spacing:-0.222px;">Schedule fo Chevron invoices</span>
<span class="abs" style="left:298.5px;top:803.1px;height:18.3px;line-height:21.7px;letter-spacing:-0.417px;">PO 6112</span>
<span class="abs" style="left:544.0px;top:803.1px;height:18.3px;line-height:21.7px;letter-spacing:-0.174px;">Invoice 663190539</span>
<span class="abs" style="left:834.6px;top:766.4px;height:18.3px;line-height:21.7px;letter-spacing:-0.844px;color:#ff0000;font-weight:bold;">Questions:</span>
<span class="abs" style="left:929.6px;top:766.4px;height:18.3px;line-height:21.7px;letter-spacing:-0.2px;color:#ff0000;">Who is correct on the pricing - currently a variance of $0.050 per gallon</span>
<span class="abs" style="left:929.6px;top:784.7px;height:18.3px;line-height:21.7px;letter-spacing:-0.23px;color:#ff0000;">Who is correct on freight - Chevron charged $3,144, but PO included nothing</span>
<span class="abs" style="left:929.6px;top:803.1px;height:18.3px;line-height:21.7px;letter-spacing:-0.241px;color:#ff0000;">Who is correct on used oil fee - Chevron charged $1,572, but PO included nothing</span>
</div></div>
</body>
</html>
